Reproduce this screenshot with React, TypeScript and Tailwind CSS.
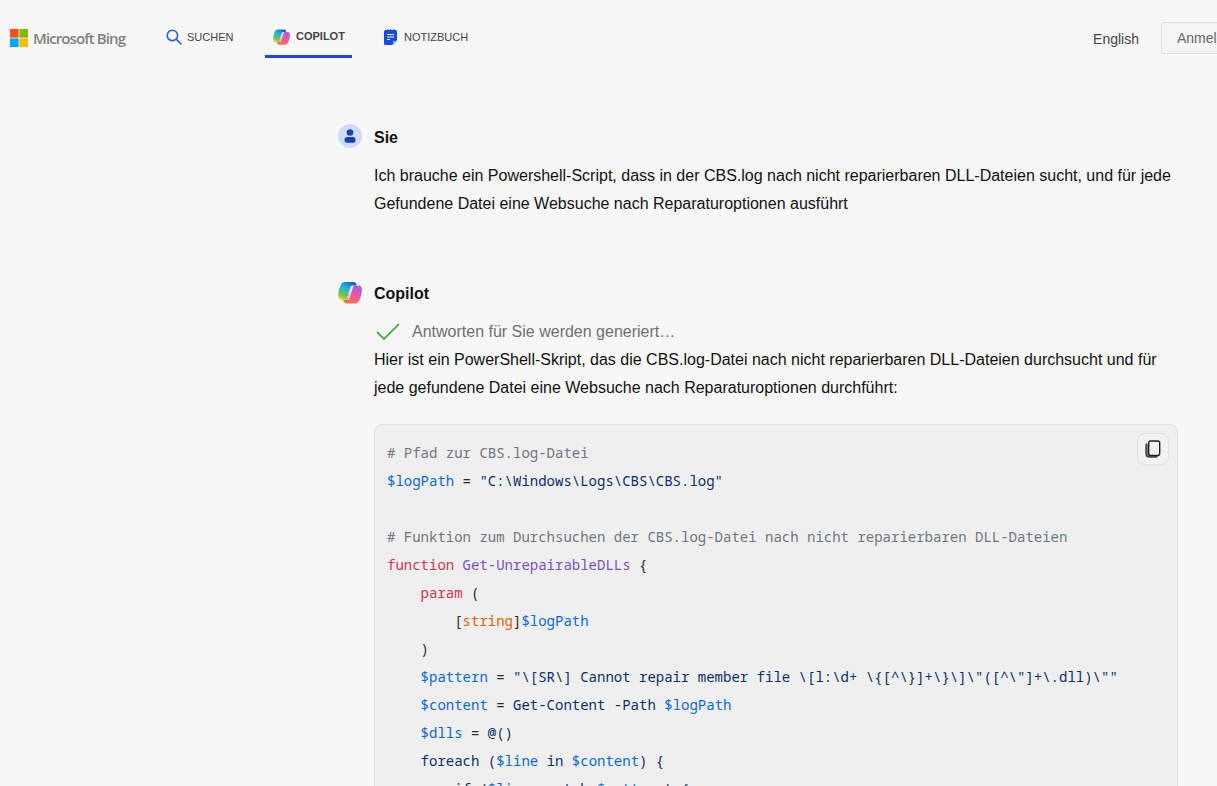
import type { ReactNode } from 'react';

const sans = "font-['Liberation_Sans',Arial,sans-serif]";

function Tok({ c, children }: { c: 'cm' | 'var' | 'kw' | 'fn' | 'str' | 'ty'; children: ReactNode }) {
  const colors = {
    cm: 'text-[#6e7781]',
    var: 'text-[#0969da]',
    kw: 'text-[#d3334f]',
    fn: 'text-[#7a4fc8]',
    str: 'text-[#0a3069]',
    ty: 'text-[#e36209]',
  };
  return <span className={colors[c]}>{children}</span>;
}

function CopilotIcon({ size, id }: { size: number; id: string }) {
  return (
    <svg width={size} height={size} viewBox="0 0.5 24 24">
      <defs>
        <linearGradient id={`${id}a`} x1="0.75" y1="0" x2="0.2" y2="1">
          <stop offset="0" stopColor="#0f5fd0" />
          <stop offset="0.4" stopColor="#22b5e0" />
          <stop offset="0.75" stopColor="#5cc94f" />
          <stop offset="1" stopColor="#f5cf33" />
        </linearGradient>
        <linearGradient id={`${id}b`} x1="0.2" y1="1" x2="0.8" y2="0">
          <stop offset="0" stopColor="#ff7a2e" />
          <stop offset="0.5" stopColor="#f2559f" />
          <stop offset="1" stopColor="#a25fe6" />
        </linearGradient>
      </defs>
      <path d="M7 2.5h8.5c1.3 0 2.3.7 2.8 1.9l.5 1.6h-4c-1.3 0-2.2.7-2.6 1.9L9 18c-.5 1.5-1.6 2.5-3.2 2.5H3.5C1.4 20.500 0 18.800.1 16.600.3 12.500 1 9 2.700 5.500 3.600 3.600 5 2.500 7 2.500Z" fill={`url(#${id}a)`} />
      <path d="M15 6h5.500c2.100 0 3.500 1.700 3.400 3.900-.2 4.100-.9 7.600-2.600 11.100-.9 1.900-2.300 3-4.300 3H8.500c-1.300 0-2.300-.7-2.800-1.900L5.200 20.500h1.300c1.500 0 2.600-1 3.100-2.500l3-10.100C13 6.700 13.900 6 15 6Z" fill={`url(#${id}b)`} />
      <path d="M13.400 6.600h2L11.200 19c-.3 1-.8 1.600-1.600 2l3.800-14.400Z" fill="#ffffff" />
    </svg>
  );
}

function Header() {
  return (
    <header className="flex h-[58px] items-stretch overflow-hidden">
      {/* Logo */}
      <div className="ml-[10px] flex w-[150px] items-center pt-[19px]">
        <svg width="18" height="18" viewBox="0 0 18 18" className="-mt-[2px] shrink-0">
          <rect width="8.6" height="8.6" fill="#f25022" />
          <rect x="9.4" width="8.6" height="8.6" fill="#7fba00" />
          <rect y="9.4" width="8.6" height="8.6" fill="#00a4ef" />
          <rect x="9.4" y="9.4" width="8.6" height="8.6" fill="#ffb900" />
        </svg>
        <span className="ml-[5px] font-['Open_Sans',sans-serif] text-[15px] font-semibold tracking-[-0.9px] whitespace-nowrap text-[#7f7f7f]">
          Microsoft Bing
        </span>
      </div>

      {/* Tabs */}
      <nav className={`${sans} flex pt-[18px] text-[11px] text-[#444444]`}>
        <a className="ml-[5px] flex w-[100px] items-center gap-[5px] pl-[1px] pb-[2px]">
          <svg width="16" height="16" viewBox="0 0 16 16" fill="none" stroke="#2a5bdc" strokeWidth="1.6" strokeLinecap="round">
            <circle cx="6.4" cy="6.4" r="5.2" />
            <path d="m10.2 10.2 4.8 4.8" />
          </svg>
          <span>SUCHEN</span>
        </a>
        <a className="flex w-[87px] items-center gap-[6px] border-b-[3px] border-[#174ae4] pl-[8px] font-bold">
          <CopilotIcon size={17} id="nav" />
          <span>COPILOT</span>
        </a>
        <a className="ml-[32px] flex items-center gap-[7px] pb-[2px]">
          <svg width="13" height="16" viewBox="0 0 13 16">
            <path d="M1.5 1h10A1.5 1.5 0 0 1 13 2.5V11l-5 5H1.5A1.5 1.5 0 0 1 0 14.5v-12A1.5 1.5 0 0 1 1.5 1Z" fill="#174ae4" />
            <path d="M3 0v2M6.5 0v2M10 0v2" stroke="#174ae4" strokeWidth="1" />
            <path d="M3 5.5h7M3 8h7M3 10.5h3" stroke="#ffffff" strokeWidth="1" />
            <path d="M9 16v-4h4Z" fill="#8fb0f5" />
          </svg>
          <span>NOTIZBUCH</span>
        </a>
      </nav>

      {/* Right */}
      <div className={`${sans} ml-auto flex items-center pt-[20px] text-[14px] text-[#444444]`}>
        <span className="mr-[22px]">English</span>
        <button className="-mt-[2px] -mr-[60px] h-[32px] w-[116px] rounded-[2px] border border-[#e0e0e0] bg-[#f5f5f5] pl-[15px] text-left text-[#666666]">
          Anmelden
        </button>
      </div>
    </header>
  );
}

function Code() {
  return (
    <div className="relative rounded-[8px] border border-[#e3e3e3] bg-[#efefef] py-[14px] pl-[12px]">
      <button className="absolute top-[8px] right-[8px] flex h-[32px] w-[32px] items-center justify-center rounded-[8px] border border-[#dedede] bg-[#f2f2f2]">
        <svg width="16" height="18" viewBox="0 0 16 18" fill="none">
          <path d="M2 3.5C1.3 4 1 4.6 1 5.5v8C1 15.5 2.5 17 4.5 17h6c.9 0 1.5-.3 2-1" stroke="#444444" strokeWidth="1.4" fill="#777777" />
          <rect x="3.7" y="1" width="11" height="14.5" rx="2" stroke="#222222" strokeWidth="1.4" fill="#f2f2f2" />
        </svg>
      </button>
      <pre className="font-['Noto_Sans_Mono','DejaVu_Sans_Mono',monospace] text-[14px] leading-[28px] text-[#24292f]">
        <Tok c="cm"># Pfad zur CBS.log-Datei</Tok>
        {'\n'}
        <Tok c="var">$logPath</Tok> = <Tok c="str">"C:\Windows\Logs\CBS\CBS.log"</Tok>
        {'\n\n'}
        <Tok c="cm"># Funktion zum Durchsuchen der CBS.log-Datei nach nicht reparierbaren DLL-Dateien</Tok>
        {'\n'}
        <Tok c="kw">function</Tok> <Tok c="fn">Get-UnrepairableDLLs</Tok> {'{'}
        {'\n    '}
        <Tok c="kw">param</Tok> (
        {'\n        '}[<Tok c="ty">string</Tok>]<Tok c="var">$logPath</Tok>
        {'\n    '})
        {'\n    '}
        <Tok c="var">$pattern</Tok> = <Tok c="str">{'"\\[SR\\] Cannot repair member file \\[l:\\d+ \\{[^\\}]+\\}\\]\\"([^\\"]+\\.dll)\\""'}</Tok>
        {'\n    '}
        <Tok c="var">$content</Tok> = <Tok c="str">Get-Content -Path</Tok> <Tok c="var">$logPath</Tok>
        {'\n    '}
        <Tok c="var">$dlls</Tok> = <Tok c="str">@()</Tok>
        {'\n    '}
        <Tok c="str">foreach (</Tok>
        <Tok c="var">$line</Tok> <Tok c="str">in</Tok> <Tok c="var">$content</Tok>
        <Tok c="str">) {'{'}</Tok>
        {'\n        '}
        <Tok c="str">if (</Tok>
        <Tok c="var">$line</Tok> <Tok c="str">-match</Tok> <Tok c="var">$pattern</Tok>
        <Tok c="str">) {'{'}</Tok>
      </pre>
    </div>
  );
}

export default function App() {
  return (
    <div className={`${sans} h-[786px] w-full overflow-hidden bg-[#f7f7f7] text-[16px] text-[#111111]`}>
      <Header />
      <main className="mr-[39px] ml-[338px] pt-[66px]">
        {/* Sie */}
        <div className="flex h-[24px] items-center gap-[12px]">
          <div className="flex h-[24px] w-[24px] items-center justify-center rounded-full bg-[#cfdcf8]">
            <svg width="12" height="14" viewBox="0 0 12 14">
              <circle cx="6" cy="3.5" r="3.3" fill="#1440b8" />
              <rect x="0.5" y="8" width="11" height="5.8" rx="2.9" fill="#1440b8" />
            </svg>
          </div>
          <span className="pt-[3px] font-bold">Sie</span>
        </div>
        <p className="mt-[14px] pl-[36px] leading-[28px]">
          Ich brauche ein Powershell-Script, dass in der CBS.log nach nicht reparierbaren DLL-Dateien sucht, und für jede
          <br />
          Gefundene Datei eine Websuche nach Reparaturoptionen ausführt
        </p>

        {/* Copilot */}
        <div className="mt-[62px] flex h-[24px] items-center gap-[12px]">
          <CopilotIcon size={24} id="msg" />
          <span className="pt-[3px] font-bold">Copilot</span>
        </div>
        <div className="pl-[36px]">
          <div className="mt-[14px] flex h-[28px] items-center gap-[12px] text-[#707070]">
            <svg width="26" height="18" viewBox="0 0 26 18" fill="none" stroke="#0f990f" strokeWidth="1.3">
              <path d="m3 9 7 7L25 1" />
            </svg>
            <span>Antworten für Sie werden generiert…</span>
          </div>
          <p className="leading-[28px]">
            Hier ist ein PowerShell-Skript, das die CBS.log-Datei nach nicht reparierbaren DLL-Dateien durchsucht und für
            <br />
            jede gefundene Datei eine Websuche nach Reparaturoptionen durchführt:
          </p>
          <div className="mt-[22px]">
            <Code />
          </div>
        </div>
      </main>
    </div>
  );
}
